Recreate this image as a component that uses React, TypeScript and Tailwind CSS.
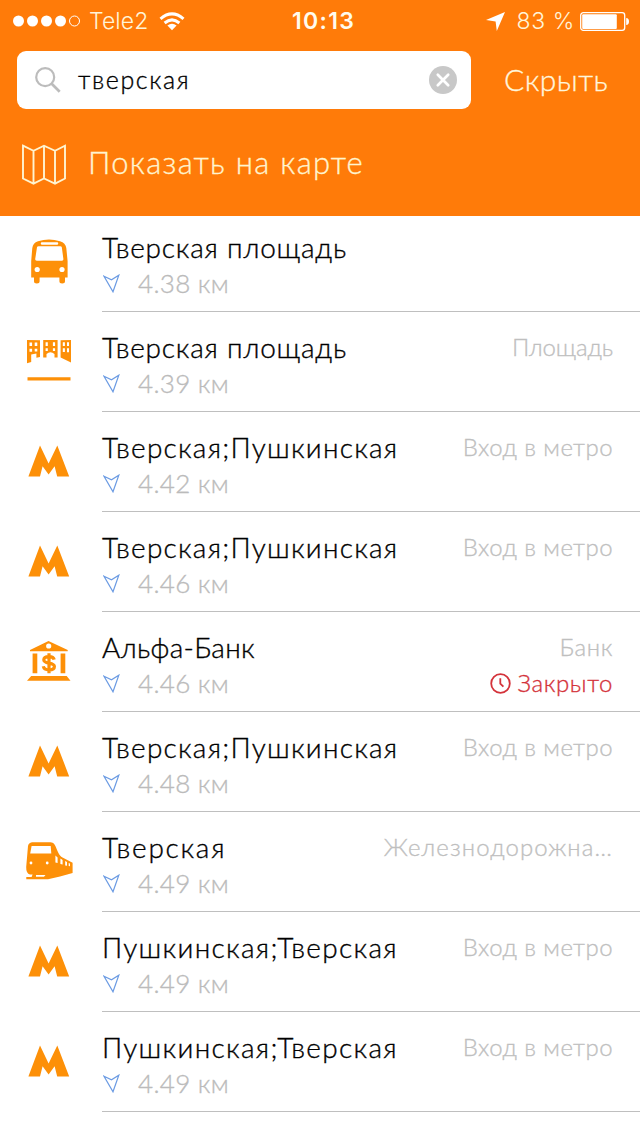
import type { ReactNode } from "react";

type IconName = "bus" | "square" | "metro" | "bank" | "train";

interface Place {
  icon: IconName;
  name: string;
  distance: string;
  kind?: string;
  closed?: boolean;
}

const places: Place[] = [
  { icon: "bus", name: "Тверская площадь", distance: "4.38 км" },
  { icon: "square", name: "Тверская площадь", distance: "4.39 км", kind: "Площадь" },
  { icon: "metro", name: "Тверская;Пушкинская", distance: "4.42 км", kind: "Вход в метро" },
  { icon: "metro", name: "Тверская;Пушкинская", distance: "4.46 км", kind: "Вход в метро" },
  { icon: "bank", name: "Альфа-Банк", distance: "4.46 км", kind: "Банк", closed: true },
  { icon: "metro", name: "Тверская;Пушкинская", distance: "4.48 км", kind: "Вход в метро" },
  { icon: "train", name: "Тверская", distance: "4.49 км", kind: "Железнодорожна…" },
  { icon: "metro", name: "Пушкинская;Тверская", distance: "4.49 км", kind: "Вход в метро" },
  { icon: "metro", name: "Пушкинская;Тверская", distance: "4.49 км", kind: "Вход в метро" },
];

// Letter spacing tuned per label
const tracking: Record<string, string> = {
  "Тверская площадь": "tracking-[0.8px]",
  "Тверская;Пушкинская": "tracking-[1.25px]",
  "Пушкинская;Тверская": "tracking-[1.3px]",
  "Альфа-Банк": "tracking-[0.3px]",
  "Тверская": "tracking-[1.75px]",
  "Площадь": "tracking-[-0.1px]",
  "Вход в метро": "tracking-[0.45px]",
  "Банк": "tracking-[0.6px]",
  "Железнодорожна…": "tracking-[1.1px]",
};

// All category icons share a 49x50 canvas
const icons: Record<IconName, ReactNode> = {
  bus: (
    <>
      <path
        fillRule="evenodd"
        d="M14 5.2Q25 1.6 36 5.2Q41.6 7 42.3 12L43.6 25V41.5H41V45.3Q41 47.5 38.2 47.5T35.4 45.3V41.5H15.6V45.3Q15.6 47.5 12.8 47.5T10 45.3V41.5H7.2V25L8.3 12Q8.9 7 14 5.2ZM17.5 6.3Q16 7.5 17.5 8.7H33.5Q35 7.5 33.5 6.3ZM13 11.3L11.2 23Q11 24.7 12.8 24.7H38Q39.6 24.7 39.4 23L37.8 11.3Q37.6 10.3 36.2 10.3H14.6Q13.2 10.3 13 11.3Z"
      />
      <circle cx="13.2" cy="33.5" r="2.6" fill="#fff" />
      <circle cx="38" cy="33.5" r="2.6" fill="#fff" />
    </>
  ),
  square: (
    <>
      <path d="M3 4L16 4.2V21L12.4 21.8V17.4L7.2 18.4V26L3 27.3ZM19.2 4H33.6V21.5H30.5V18Q26.4 14.4 22.5 18V21.5H19.2ZM36.6 4.2L47 4V26.6L36.6 21.6Z" />
      <path
        fill="#fff"
        d="M5.5 6.6h2.6v3.4h-2.6zM10.7 6.6h2.6v3.4h-2.6zM5.5 12.7h2.6v3.1h-2.6zM10.7 12.7h2.6v2.7h-2.6zM21.6 6.3h2.2v3.7h-2.2zM28.9 6.3h2.2v3.7h-2.2zM21.6 12.3h2.2v2.8h-2.2zM28.9 12.3h2.2v2.8h-2.2zM38.8 6.3h2.1v3.7h-2.1zM43 6.3h2v3.7h-2zM38.8 12.3h2.1v3.6h-2.1zM43 12.3h2v4h-2z"
      />
      <path d="M3.5 41.2H46.5V44.4H3.5Z" />
    </>
  ),
  metro: <path d="M4.4 40.4L16 9.4L24.6 27.6L33.3 9.4L45.2 40.4H33.2L30.6 30.2L24.6 38.6L18.6 30.2L16 40.4Z" />,
  bank: (
    <>
      <path
        fillRule="evenodd"
        d="M6 14L24.5 5L43.7 14V15.3H6ZM24.7 7.4A2.6 2.6 0 1 0 24.7 12.6A2.6 2.6 0 1 0 24.7 7.4ZM8.6 17.4H13.3V37.2H8.6ZM36.6 17.4H41.3V37.2H36.6ZM7.2 40H42.7L46.5 44.8H3Z"
      />
      <path
        fill="none"
        stroke="#fd9008"
        strokeWidth="3.2"
        d="M30.2 23.6C29.7 21.4 27.6 20.6 25 20.6C21.8 20.6 19.8 21.8 19.8 24C19.8 28.2 30.4 26 30.4 30.4C30.4 32.8 28 33.8 25 33.8C22 33.8 19.8 32.8 19.3 30.2M25 17.2V37.2"
      />
    </>
  ),
  train: (
    <>
      <path
        fillRule="evenodd"
        d="M8 6.2H26.5C33 6.2 32 17.6 38.5 21.5L48.6 26.8V37L36 40.4L24 43.2H2.3V41H7.6L8.6 38.6H6Q2 37.5 2.2 31L4 10Q4.6 6.8 8 6.2ZM7.6 10L6.2 17.4H27.3L26.7 10ZM31.4 19.5V26.6L33.6 27V21.6ZM36.4 22.5V28L38.6 28.4V24ZM41.2 25V29.4L43 29.8V26ZM44.7 26.9V30L46 30.3V27.6Z"
      />
      <circle cx="7" cy="27" r="1.4" fill="#fff" />
      <circle cx="23.2" cy="27" r="1.4" fill="#fff" />
      <path d="M12 39H21.5L20 40.8H12Z" fill="#fff" />
    </>
  ),
};

function StatusBar() {
  return (
    <div className="flex h-10 items-center pt-0.5 font-['Inter'] text-[23px] leading-none [-webkit-text-stroke:0px]">
      <div className="flex w-[292px] items-center pl-[13px]">
        <svg width="68" height="12" viewBox="0 0 68 12" fill="#fff">
          <circle cx="5.5" cy="6" r="5.5" />
          <circle cx="19.5" cy="6" r="5.5" />
          <circle cx="33.5" cy="6" r="5.5" />
          <circle cx="47.5" cy="6" r="5.5" />
          <circle cx="61.5" cy="6" r="5" fill="none" stroke="#fff" />
        </svg>
        <span className="ml-2 tracking-[0.1px] text-[#fff4d8]">Tele2</span>
        <svg className="ml-[11px]" width="26" height="19" viewBox="0 0 26 19" fill="none" stroke="#fff" strokeWidth="3">
          <path d="M1.5 6.8Q13-3 24.5 6.8M5.6 11Q13 4.8 20.4 11" />
          <path d="M8.4 13.6Q13 9.7 17.6 13.6L13 18.2Z" fill="#fff" stroke="none" />
        </svg>
      </div>
      <span className="font-semibold tracking-[1.3px] text-[#fffbee]">10:13</span>
      <div className="ml-auto flex items-center pr-2.5">
        <svg width="19" height="19" viewBox="0 0 19 19" fill="#fff">
          <path d="M19 0L10.8 19L9.6 9.4L0 8Z" />
        </svg>
        <span className="ml-3 font-light tracking-[0.6px] text-[#fff4d8]">83 %</span>
        <svg className="ml-[5px]" width="50" height="19" viewBox="0 0 50 19" fill="#fff">
          <rect x=".7" y=".7" width="44" height="17.6" rx="2.6" fill="none" stroke="#fff" strokeWidth="1.3" />
          <rect x="2.2" y="2.3" width="34.6" height="14.6" rx="1" />
          <path d="M46.2 6Q49 6.4 49 9.5T46.2 13Z" />
        </svg>
      </div>
    </div>
  );
}

function Header() {
  return (
    <header className="h-[216px] bg-[#ff7b09]">
      <StatusBar />
      <div className="flex items-center px-[17px] pt-[11px]">
        <div className="flex h-[58px] w-[454px] items-center rounded-[9px] bg-white pr-3.5 pl-[18px]">
          <svg width="26" height="26" viewBox="0 0 26 26" fill="none" stroke="#bcbcbc" strokeWidth="2.2">
            <circle cx="10.2" cy="10.2" r="9" />
            <path d="M16.7 16.7L24.7 24.7" strokeWidth="2.7" />
          </svg>
          <span className="mb-px ml-[17px] text-[25px] tracking-[1.6px] text-black">тверская</span>
          <svg className="ml-auto" width="28" height="28" viewBox="0 0 28 28">
            <circle cx="14" cy="14" r="14" fill="#c8c8c8" />
            <path d="M8.8 8.8L19.2 19.2M19.2 8.8L8.8 19.2" stroke="#fff" strokeWidth="2.7" strokeLinecap="round" />
          </svg>
        </div>
        <button className="mb-0.5 ml-[33px] text-[30px] leading-9 tracking-[0.5px] text-[#fff6dd]">Скрыть</button>
      </div>
      <div className="flex items-center pt-[31px] pl-[22px] text-[#fff4d0]">
        <svg className="mt-1" width="44" height="42" viewBox="0 0 44 42" fill="none" stroke="currentColor" strokeWidth="1.9">
          <path d="M1 1.7L11.5 6.8L22 1.7L33 6.8L43 1.7V34.5L33 39.6L22 34.5L11.5 39.6L1 34.5ZM11.5 6.8V39.6M22 1.7V34.5M33 6.8V39.6" />
        </svg>
        <span className="mb-0.5 ml-[22px] text-[31px] leading-9 tracking-[1.3px]">Показать на карте</span>
      </div>
    </header>
  );
}

function PlaceRow({ icon, name, distance, kind, closed }: Place) {
  return (
    <li className="flex h-[100px] items-end first:h-24">
      <svg className="mr-[29px] mb-[26px] ml-6 shrink-0" width="49" height="50" viewBox="0 0 49 50" fill="#fd9008">
        {icons[icon]}
      </svg>
      <div className="flex h-24 min-w-0 grow justify-between border-b border-[#bfbfbf] pr-[27px]">
        <div className="pt-[13px]">
          <p className={`text-[28px] leading-9 whitespace-nowrap text-black ${tracking[name]}`}>{name}</p>
          <p className="flex h-9 items-center text-[26px] leading-9 tracking-[0.3px] text-[#bbb]">
            <svg className="mr-[18px] ml-px" width="17" height="19" viewBox="0 0 17 19" fill="none" stroke="#6b9be3" strokeWidth="1.2">
              <path d="M1 2.2L8.5 5.8L15.8 1.2L10 17.8Z" />
            </svg>
            {distance}
          </p>
        </div>
        <div className="flex flex-col items-end pt-[13px] text-2xl text-[#bfbfbf]">
          <p className={`leading-9 ${kind ? tracking[kind] : ""}`}>{kind}</p>
          {closed && (
            <p className="flex items-center leading-9 tracking-[0.6px] text-[#d4333b]">
              <svg className="mr-[7px]" width="21" height="21" viewBox="0 0 21 21" fill="none" stroke="currentColor" strokeWidth="1.8">
                <circle cx="10.5" cy="10.5" r="9.3" />
                <path d="M10.3 5.2V10.6L13.4 13.7" />
              </svg>
              Закрыто
            </p>
          )}
        </div>
      </div>
    </li>
  );
}

export default function App() {
  return (
    <div
      lang="ru"
      className="h-[1136px] w-[640px] overflow-hidden bg-white font-['Lato','Noto_Sans',sans-serif] font-light [-webkit-text-stroke:0.35px]"
    >
      <Header />
      <ul>
        {places.map((place, i) => (
          <PlaceRow key={i} {...place} />
        ))}
      </ul>
    </div>
  );
}
